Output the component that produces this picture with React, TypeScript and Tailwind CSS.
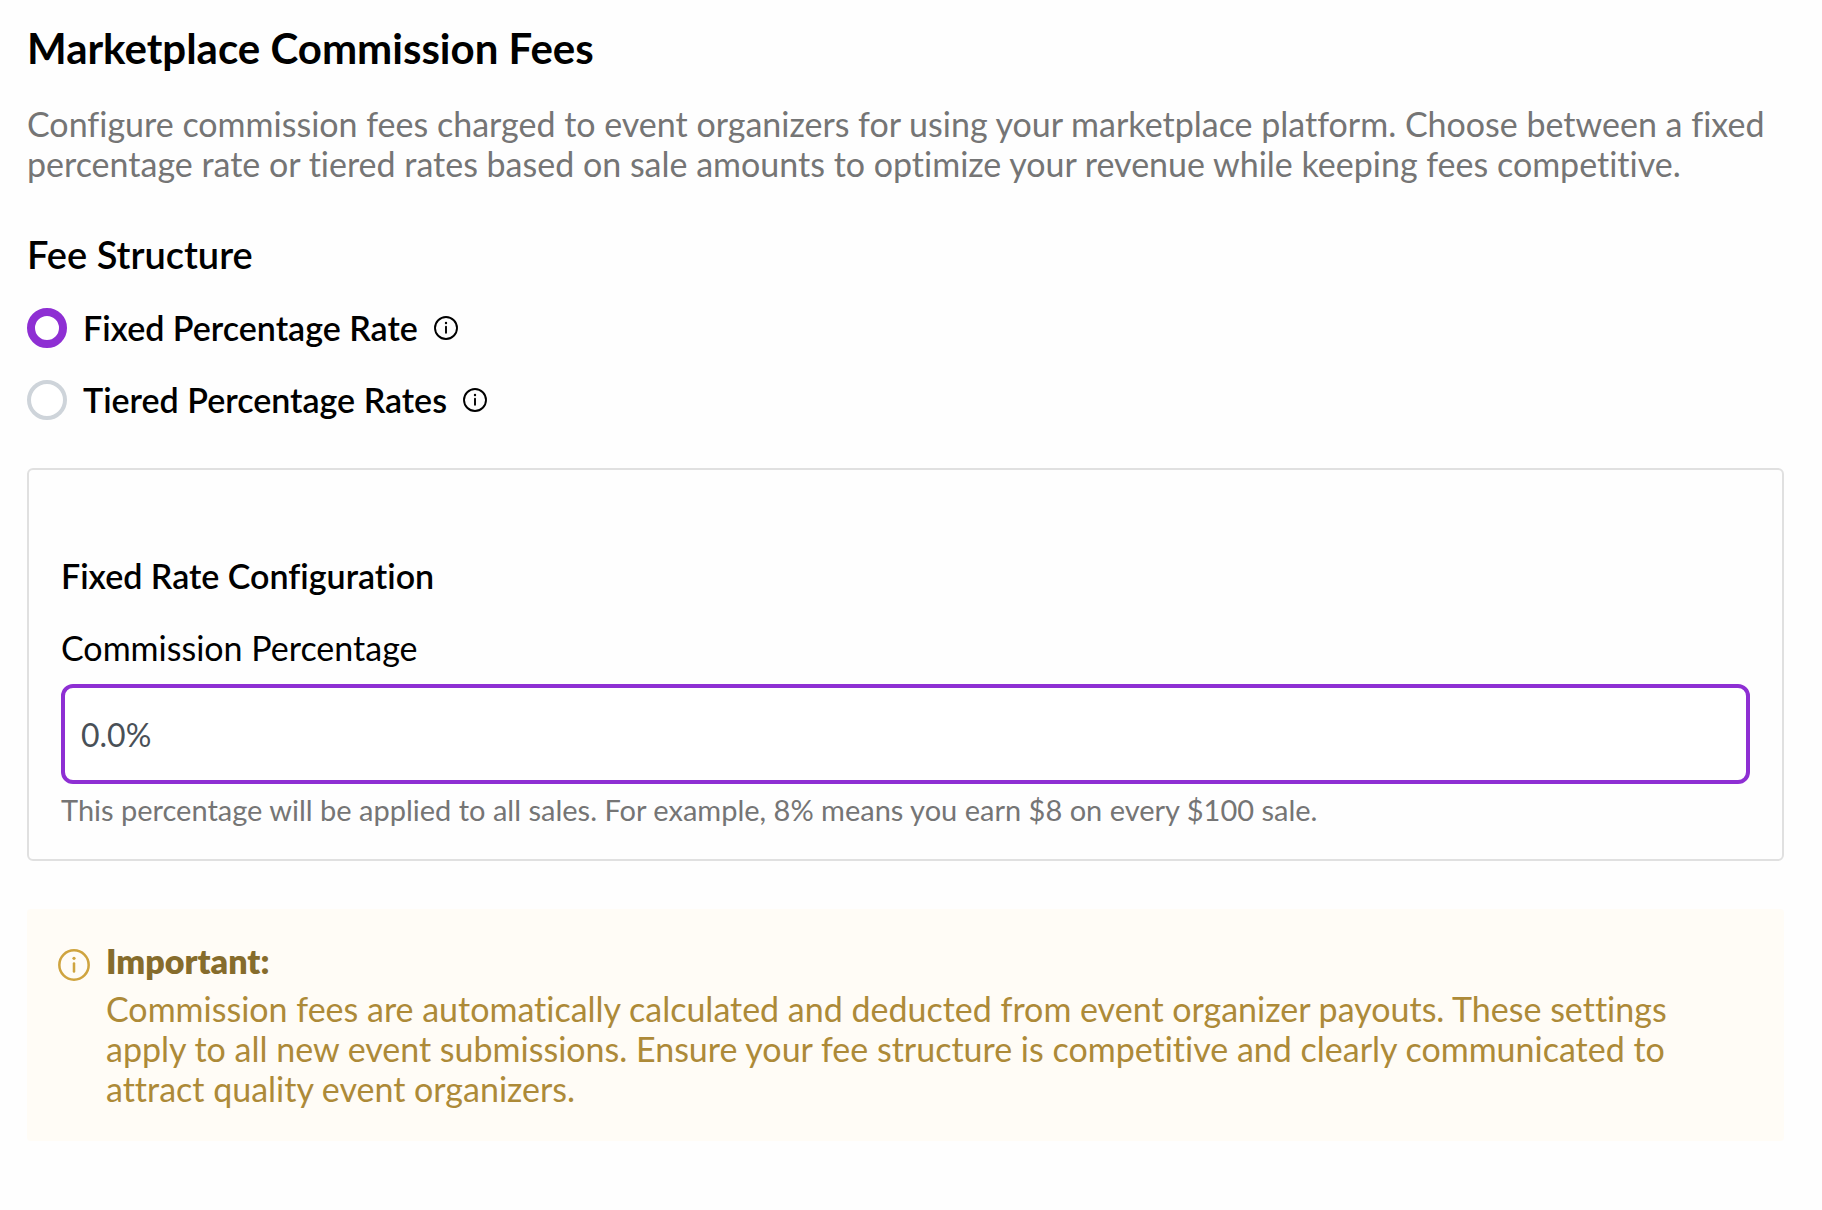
import { useState } from 'react'

type InfoIconProps = {
  className: string
  strokeWidth: number
}

function InfoIcon({ className, strokeWidth }: InfoIconProps) {
  return (
    <svg viewBox="0 0 24 24" fill="none" stroke="currentColor" strokeWidth={strokeWidth} strokeLinecap="round" className={className} aria-hidden="true">
      <circle cx="12" cy="12" r="11" />
      <path d="M12 10.8v6" />
      <circle cx="12" cy="7" r="1.2" fill="currentColor" stroke="none" />
    </svg>
  )
}

const feeTypes = [
  { value: 'fixed', label: 'Fixed Percentage Rate', help: 'About fixed percentage rate' },
  { value: 'tiered', label: 'Tiered Percentage Rates', help: 'About tiered percentage rates' },
]

export default function App() {
  const [feeType, setFeeType] = useState('fixed')
  const [rate, setRate] = useState('0.0%')

  return (
    <main className="min-h-screen bg-[#fefefe] pt-6 pr-[38px] pb-10 pl-[27px] font-['Lato',sans-serif] text-[34px] leading-10 text-black [font-variant-ligatures:no-common-ligatures]">
      <h1 className="text-[42px] leading-12 font-bold">Marketplace Commission Fees</h1>
      <p className="mt-8 text-[#757575]">
        Configure commission fees charged to event organizers for using your marketplace platform. Choose between a fixed
        percentage rate or tiered rates based on sale amounts to optimize your revenue while keeping fees competitive.
      </p>

      <fieldset className="mt-12">
        <legend className="text-[38px] leading-11 font-semibold">Fee Structure</legend>
        <div className="mt-8 flex flex-col gap-8">
          {feeTypes.map(({ value, label, help }) => (
            <div key={value} className="flex items-center gap-4">
              <input
                id={value}
                type="radio"
                name="feeType"
                value={value}
                checked={feeType === value}
                onChange={() => setFeeType(value)}
                className="size-10 shrink-0 appearance-none rounded-full border-4 border-[#ced4da] bg-white checked:border-8 checked:border-[#8e2fd3]"
              />
              <label htmlFor={value} className="font-semibold">{label}</label>
              <button type="button" aria-label={help}>
                <InfoIcon className="size-6" strokeWidth={1.9} />
              </button>
            </div>
          ))}
        </div>
      </fieldset>

      <section className="mt-12 rounded-md border-2 border-[#e0e0e0] px-8 pt-[86px] pb-8">
        <h2 className="font-semibold">Fixed Rate Configuration</h2>
        <label htmlFor="rate" className="mt-8 block">Commission Percentage</label>
        <input
          id="rate"
          type="text"
          value={rate}
          onChange={(e) => setRate(e.target.value)}
          className="mt-4 block h-[100px] w-full rounded-xl border-4 border-[#8e2fd3] bg-white px-4 text-[32px] text-[#495057] outline-none"
        />
        <p className="mt-2 text-[29px] leading-[35px] text-[#757575]">
          This percentage will be applied to all sales. For example, 8% means you earn $8 on every $100 sale.
        </p>
      </section>

      <section className="mt-12 flex gap-4 rounded-sm bg-[#fffcf6] py-8 pr-12 pl-[31px] text-[#ad8a38]">
        <InfoIcon className="mt-2 size-8 shrink-0 text-[#cfa43f]" strokeWidth={1.9} />
        <div>
          <h3 className="font-extrabold text-[#866c2c]">Important:</h3>
          <p className="mt-2">
            Commission fees are automatically calculated and deducted from event organizer payouts. These settings apply to
            all new event submissions. Ensure your fee structure is competitive and clearly communicated to attract quality
            event organizers.
          </p>
        </div>
      </section>
    </main>
  )
}
